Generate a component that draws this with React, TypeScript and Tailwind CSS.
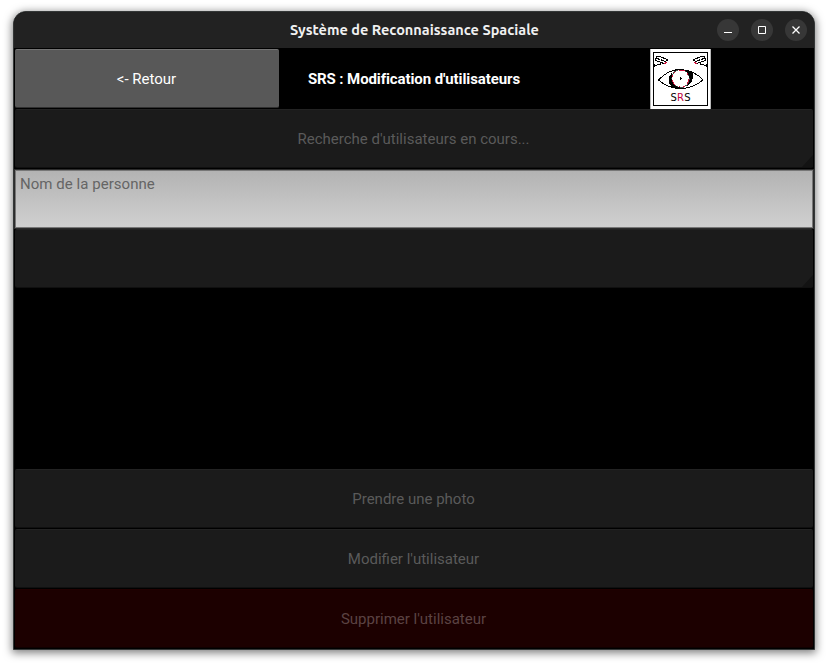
import React from "react";

const shell =
  "relative ml-px mb-px flex h-[59px] items-center justify-center overflow-hidden rounded-[2px] border-y pt-px pr-px text-[15px]";
const dark = "mr-px border-t-[#232323] border-b-[#101010] bg-[#1b1b1b] text-[#5a5a5a]";

function Bar({ label, tone = dark, corner = false }: { label?: string; tone?: string; corner?: boolean }) {
  return (
    <button className={`${shell} ${tone}`}>
      {label}
      {corner && (
        <svg className="absolute right-0 bottom-0" width="11" height="12">
          <path d="M11 0V12H0Z" fill="#131313" />
        </svg>
      )}
    </button>
  );
}

function Camera() {
  return (
    <g fill="none" stroke="#000" strokeWidth="1">
      <path d="M6.500 7.500H9.500L17.500 10.500L16.500 12.500" />
      <path d="M6.500 7.500L5.500 11.500L14 14.500" />
      <path d="M7 9.500L16 12.500" strokeDasharray="3 1" />
      <path d="M10.500 14V15.500H7.500L6.500 16.500H4.500M4.500 15V18" />
      <path d="M15 13.500H17M14 14.500H16" stroke="#d0103a" />
    </g>
  );
}

function Logo() {
  return (
    <svg width="61" height="60" viewBox="0 0 61 60" shapeRendering="crispEdges">
      <rect width="61" height="60" fill="#fff" />
      <path d="M0.500 0V60M60.500 0V60" stroke="#b8b8b8" />
      <rect x="3.500" y="3.500" width="54" height="53" fill="none" stroke="#000" />
      <Camera />
      <g transform="translate(61 0) scale(-1 1)">
        <Camera />
      </g>
      <path d="M8.500 31C14 25 22 20.500 30 20.500C39 20.500 48 25 53 31C46 37 39 39.500 31 39.500S15 37 8.500 31Z" fill="#fff" stroke="#000" />
      <path d="M22 23.500L19 28L18.500 33L21.500 38L27 39.500H33L28 37L24 34L22 29Z" fill="#000" />
      <path d="M34 20.500L43 24L43 29L41 34L35 39.500L38 35.500L40 30L38 24Z" fill="#000" />
      <circle cx="30.500" cy="29.500" r="9" fill="#fff" stroke="#000" strokeWidth="0.700" />
      <circle cx="30.500" cy="29.500" r="8.500" fill="none" stroke="#d0103a" strokeDasharray="6 3 2 3 1 4" />
      <path d="M30 28H31V29H32V30H31V31H30Z" fill="#000" />
      <text x="20.500" y="52" fontFamily="DejaVu Sans, sans-serif" fontSize="10" textLength="20">
        S<tspan fill="#c00040">R</tspan>S
      </text>
    </svg>
  );
}

function Control({ children }: { children: React.ReactNode }) {
  return (
    <button className="flex size-[22px] items-center justify-center rounded-full bg-[#373737]">
      <svg width="22" height="22" fill="none" stroke="#fff">
        {children}
      </svg>
    </button>
  );
}

export default function App() {
  return (
    <div className="h-[666px] w-[828px] overflow-hidden bg-white pt-[11px] pl-[13px] font-[Roboto,sans-serif]">
      <main className="flex h-[639px] w-[802px] flex-col overflow-hidden rounded-t-[13px] border border-[#343737] bg-black shadow-[0_2px_8px_1px_rgba(0,0,0,0.5)]">
        <header className="mb-px grid h-9 shrink-0 grid-cols-[1fr_auto_1fr] items-center bg-[#222]">
          <span />
          <h1 className="pl-px font-[Ubuntu,'Noto_Sans',sans-serif] text-[14.500px] font-semibold text-[#f0f0f0]">
            Système de Reconnaissance Spaciale
          </h1>
          <div className="flex justify-end gap-3 pr-[7px]">
            <Control><path d="M7 13.500H15" /></Control>
            <Control><path d="M7.500 7.500H14.500V14.500H7.500Z" /></Control>
            <Control><path d="M7.500 7.500L14.500 14.500M14.500 7.500L7.500 14.500" strokeWidth="1.300" /></Control>
          </div>
        </header>
        <section className="grid h-[60px] shrink-0 grid-cols-3">
          <Bar label="<- Retour" tone="mr-[1.660px] border-t-[#747474] border-b-[#303030] bg-[#585858] text-white" />
          <h2 className="flex items-center justify-center text-[15px] font-bold tracking-[-0.1px] text-white">SRS : Modification d'utilisateurs</h2>
          <div className="flex justify-center"><Logo /></div>
        </section>
        <Bar label="Recherche d'utilisateurs en cours..." corner />
        <div className="flex h-[60px] shrink-0 border border-[#2c2c2c]">
          <input
            className="h-[58px] w-full border border-[#777] bg-linear-to-b from-[#b3b3b3] to-[#d0d0d0] px-1 pt-0 pb-[30px] text-[15px] tracking-[0.04px] placeholder:text-[#656565]"
            placeholder="Nom de la personne"
          />
        </div>
        <Bar corner />
        <div className="flex-1" />
        <Bar label="Prendre une photo" />
        <Bar label="Modifier l'utilisateur" />
        <Bar label="Supprimer l'utilisateur" tone="mr-px border-t-[#210000] border-b-[#100000] bg-[#1c0000] text-[#5b4343]" />
      </main>
    </div>
  );
}
